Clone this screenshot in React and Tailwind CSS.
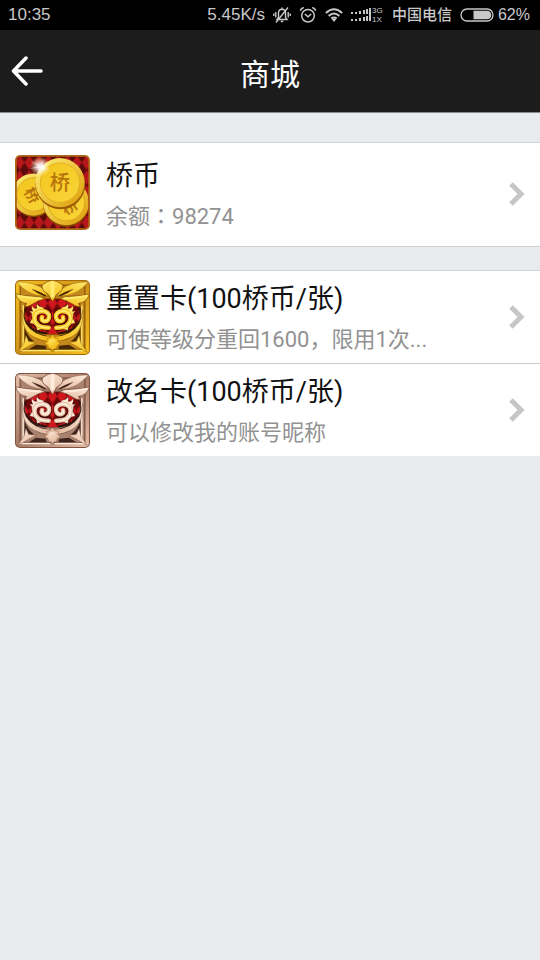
import { useId } from 'react';

const GOLD = {
  frame: '#cf921a', light: '#ffe96f', mid: '#f6c01f', dark: '#7a4704', deep: '#321802', plate: '#c4871a', edge: '#a36c0c',
};

const ROSE = {
  frame: '#a67a66', light: '#fdebdc', mid: '#e6bfa6', dark: '#6b4033', deep: '#2c1511', plate: '#a98370', edge: '#80523f',
};

const CoinIcon = () => (
  <svg viewBox="0 0 220 220" className="mb-1 size-[75px] shrink-0" aria-hidden="true">
    <defs>
      <pattern id="argyle" width="28" height="44" patternUnits="userSpaceOnUse">
        <rect width="28" height="44" fill="#5d0a0b" />
        <path d="M14 0 L28 22 L14 44 L0 22Z" fill="#b5171a" />
      </pattern>
      <linearGradient id="coinRim" x1="0" y1="0" x2="1" y2="1">
        <stop offset="0" stopColor="#fff27a" />
        <stop offset="1" stopColor="#dd9a06" />
      </linearGradient>
      <linearGradient id="coinFace" x1="0" y1="0" x2="1" y2="1">
        <stop offset="0" stopColor="#f3c51c" />
        <stop offset="1" stopColor="#f9d53a" />
      </linearGradient>
      <radialGradient id="coinGlint">
        <stop offset="0" stopColor="#fff" />
        <stop offset="0.35" stopColor="#fff" stopOpacity="0.75" />
        <stop offset="1" stopColor="#fff6a0" stopOpacity="0" />
      </radialGradient>
      <clipPath id="coinClip"><rect x="5" y="5" width="210" height="210" rx="11" /></clipPath>
    </defs>
    <rect width="220" height="220" rx="15" fill="#b46a1c" />
    <g clipPath="url(#coinClip)">
      <rect width="220" height="220" fill="url(#argyle)" />
      <circle cx="55" cy="120" r="62" fill="#8a4a02" />
      <circle cx="54" cy="116" r="62" fill="url(#coinRim)" />
      <circle cx="54" cy="116" r="49" fill="url(#coinFace)" stroke="#d39a10" strokeWidth="2" />
      <text x="50" y="134" fontSize="46" fontWeight="700" fill="#b8740a" textAnchor="middle" transform="rotate(60 50 118)" fontFamily="Noto Sans CJK SC, sans-serif">桥</text>
      <circle cx="150" cy="144" r="67" fill="#8a4a02" />
      <circle cx="150" cy="139" r="67" fill="url(#coinRim)" />
      <circle cx="150" cy="139" r="54" fill="url(#coinFace)" stroke="#d39a10" strokeWidth="2" />
      <text x="160" y="168" fontSize="46" fontWeight="700" fill="#b8740a" textAnchor="middle" transform="rotate(-32 160 152)" fontFamily="Noto Sans CJK SC, sans-serif">桥</text>
      <circle cx="133" cy="86" r="73" fill="#9a5a04" />
      <circle cx="132" cy="81" r="72" fill="url(#coinRim)" />
      <circle cx="132" cy="81" r="58" fill="url(#coinFace)" stroke="#d9a316" strokeWidth="2" />
      <text x="132" y="104" fontSize="60" fontWeight="500" fill="#b8740a" textAnchor="middle" fontFamily="Noto Sans CJK SC, sans-serif">桥</text>
      <circle cx="74" cy="34" r="30" fill="url(#coinGlint)" />
      <path d="M46 18 L74 30 L86 10 L79 33 L102 46 L76 39 L64 62 L70 38 L42 40 L68 32Z" fill="#fff" opacity="0.5" />
    </g>
  </svg>
);

const CURL = 'M99 140 Q58 140 57 112 Q58 91 80 91 Q100 93 100 108 Q98 122 85 121 Q76 118 79 109';

const CardHalf = ({ c, fill }) => (
  <g>
    {/* corner cutouts and struts */}
    <path d="M27 84 L36 76 Q28 96 29 122Z" fill={c.deep} />
    <path d="M28 140 Q37 166 56 180 L28 186Z" fill={c.deep} opacity="0.85" />
    <path d="M40 203 L62 190 L90 193 L93 203Z" fill={c.deep} opacity="0.85" />
    <path d="M24 74 V192" stroke={c.light} strokeWidth="4" />
    <path d="M18 207 H104" stroke={c.light} strokeWidth="4" />
    <path d="M8 213 L27 184 L32 162 L40 180 L62 183 L42 193Z" fill={fill} stroke={c.dark} strokeWidth="1" />
    {/* crescent */}
    <path d="M23 92 Q33 149 94 165 L93 180 Q32 174 23 92Z" fill={c.deep} />
    <path d="M21 88 Q22 110 32 128 Q54 163 104 166 L99 181 Q48 173 32 146 Q19 121 21 88Z" fill={fill} stroke={c.dark} strokeWidth="1" />
    <path d="M32 118 Q48 150 96 154 L92 160 Q46 155 32 118Z" fill={c.deep} />
    {/* flame curl */}
    <path d={CURL} fill="none" stroke="#3f0405" strokeWidth="18" />
    <path d="M50 116 L49 98 L42 91 L52 92 Q46 84 50 75 Q55 85 64 83 Q61 76 65 70 Q69 79 82 80 L90 92 L62 104Z M52 108 L57 130 L43 126Z M60 126 L80 144 L65 148Z" fill={c.light} stroke="#3f0405" strokeWidth="1" />
    <path d={CURL} fill="none" stroke={c.mid} strokeWidth="13" strokeLinecap="round" />
    <path d={CURL} fill="none" stroke={c.light} strokeWidth="6" strokeLinecap="round" />
    {/* wings */}
    <path d="M34 18 Q76 20 94 48 Q54 46 34 18Z" fill={c.deep} />
    <path d="M5 6 Q54 4 86 28 L98 50 Q76 34 50 27 Q64 39 86 47 Q40 48 5 6Z" fill={fill} stroke={c.dark} strokeWidth="1" />
    <path d="M1 40 Q20 48 48 47 Q72 48 90 54 Q68 60 54 69 Q40 80 28 78 L34 69 Q10 66 1 40Z" fill={fill} stroke={c.dark} strokeWidth="2" />
    <path d="M8 46 Q42 54 78 54" stroke={c.light} strokeWidth="5" fill="none" />
  </g>
);

const CardIcon = ({ c }) => {
  const id = useId();

  return (
    <svg viewBox="0 0 220 220" className="size-[75px] shrink-0" aria-hidden="true">
      <defs>
        <linearGradient id={`${id}m`} x1="0" y1="0" x2="0.6" y2="1">
          <stop offset="0" stopColor={c.light} />
          <stop offset="1" stopColor={c.mid} />
        </linearGradient>
        <linearGradient id={`${id}f`} x1="0" y1="0" x2="1" y2="1">
          <stop offset="0" stopColor={c.mid} />
          <stop offset="0.5" stopColor={c.frame} />
          <stop offset="1" stopColor={c.mid} />
        </linearGradient>
        <pattern id={`${id}d`} x="12" y="2" width="28" height="44" patternUnits="userSpaceOnUse">
          <rect width="28" height="44" fill="#6d0709" />
          <path d="M14 0 L28 22 L14 44 L0 22Z" fill="#d0171b" />
        </pattern>
      </defs>
      <rect width="220" height="220" rx="15" fill={c.edge} />
      <rect x="3" y="3" width="214" height="214" rx="12" fill={`url(#${id}f)`} />
      <rect x="15" y="15" width="190" height="190" fill={c.plate} stroke={c.dark} strokeWidth="3" />
      <path d="M34 55 H186 Q202 104 180 135 Q156 160 110 160 Q64 160 40 135 Q18 104 34 55Z" fill={`url(#${id}d)`} stroke={c.dark} strokeWidth="2" />
      <CardHalf c={c} fill={`url(#${id}m)`} />
      <g transform="translate(220 0) scale(-1 1)">
        <CardHalf c={c} fill={`url(#${id}m)`} />
      </g>
      <path d="M110 1 L123 4 L140 14 Q143 29 129 37 Q118 43 115 56 L110 62 L105 56 Q102 43 91 37 Q77 29 80 14 L97 4Z" fill={`url(#${id}m)`} stroke={c.dark} strokeWidth="2" />
      <path d="M110 9 V46" stroke={c.light} strokeWidth="12" strokeLinecap="round" />
      <path d="M110 160 L117 169 L127 171 L126 180 L133 187 L124 192 L121 202 L114 202 L110 211 L106 202 L99 202 L96 192 L87 187 L94 180 L93 171 L103 169Z" fill={c.mid} stroke={c.dark} strokeWidth="1" />
      <circle cx="110" cy="185" r="12" fill={`url(#${id}m)`} />
    </svg>
  );
};

const Chevron = () => (
  <svg viewBox="0 0 16 26" className="h-[26px] w-4 shrink-0" fill="none" stroke="#c6c6c8" strokeWidth="5" aria-hidden="true">
    <path d="M2 3 L12 13 L2 23" />
  </svg>
);

const StoreRow = ({ icon, title, desc, className }) => (
  <button type="button" className={`flex w-full items-center gap-4 bg-white px-[15px] text-left ${className}`}>
    {icon}
    <span className="flex min-w-0 flex-1 flex-col pt-1">
      <span className="truncate text-[27px] leading-[42px] text-[#111]">{title}</span>
      <span className="h-10 truncate text-[22px] leading-[40px] text-[#929292]">{desc}</span>
    </span>
    <Chevron />
  </button>
);

const StatusBar = () => (
  <div className="flex h-[30px] items-center bg-black pr-2.5 pl-2 font-['Liberation_Sans','Noto_Sans_CJK_SC',sans-serif] text-[17px] text-[#c8c8c8]">
    <span>10:35</span>
    <span className="ml-auto">5.45K/s</span>

    {/* muted bell */}
    <svg viewBox="0 0 18 18" className="ml-2 size-[18px]" fill="none" stroke="currentColor" strokeWidth="1.4">
      <path d="M4 13.5 L5.5 11.5 V7 Q5.5 3.4 9 3.2 Q12.5 3.4 12.5 7 V11.5 L14 13.5Z M7.8 15.5 H10.2 M9 1.5 V3 M2.8 6 V11.5 M15.2 6 V11.5 M.8 7.5 V10 M17.2 7.5 V10 M15 1.5 L3 16.5" />
    </svg>
    {/* alarm */}
    <svg viewBox="0 0 18 18" className="ml-2 size-[18px]" fill="none" stroke="currentColor" strokeWidth="1.5">
      <circle cx="9" cy="9.7" r="6.3" />
      <path d="M5.8 8 L9 10.8 L12.2 8 M1.3 4.8 Q2 2.2 4.8 1.6 M16.7 4.8 Q16 2.2 13.2 1.6" />
    </svg>
    {/* wifi */}
    <svg viewBox="0 0 18 18" className="ml-2 size-[18px]" fill="none" stroke="currentColor" strokeWidth="2">
      <path d="M.9 7 Q9 -.6 17.1 7 M3.7 10 Q9 5 14.3 10 M6.3 12.6 Q9 10.3 11.7 12.6" />
      <path d="M6.8 13.2 Q9 11.6 11.2 13.2 L9 16Z" fill="currentColor" stroke="none" />
    </svg>
    {/* dual sim signal */}
    <svg viewBox="0 0 20 16" className="ml-2 h-4 w-5" fill="currentColor">
      <path d="M0 5h2v2H0z M4 5h2v2H4z M8 4h2v3H8z M12 3h2v4h-2z M15 2h2v5h-2z M0 12h2v2H0z M4 12h2v2H4z M8 11h2v3H8z M12 10h2v4h-2z M15 9h2v5h-2z M18 1h2v13h-2z" />
    </svg>
    <span className="ml-px flex w-3 flex-col text-[8px] leading-[9px]">
      <span>3G</span>
      <span>1X</span>
    </span>
    <span className="ml-2 text-[15px] font-medium">中国电信</span>
    {/* battery */}
    <svg viewBox="0 0 34 14" className="ml-2 h-3.5 w-[34px]">
      <rect x="1" y="1" width="32" height="12" rx="6" fill="none" stroke="currentColor" strokeWidth="1.3" />
      <path d="M13.5 2.7 H27 A4.3 4.3 0 0 1 27 11.3 H13.5Z" fill="currentColor" />
    </svg>
    <span className="ml-1 text-[16px]">62%</span>
  </div>
);

export default function App() {
  return (
    <div className="min-h-screen bg-[#e9ebed] font-[Roboto,'Noto_Sans_CJK_SC',sans-serif]">
      <StatusBar />

      <header className="grid h-[83px] grid-cols-[1fr_auto_1fr] items-center border-b border-[#8a8a8a] bg-[#1c1c1c]">
        <button type="button" aria-label="返回" className="ml-2.5 justify-self-start">
          <svg viewBox="0 0 34 30" className="h-[30px] w-[34px]" fill="none" stroke="#fff" strokeWidth="3.5" strokeLinecap="round" strokeLinejoin="round">
            <path d="M16 2 L3.5 15 L16 28 M4 15 H31" />
          </svg>
        </button>
        <h1 className="pt-2 text-[30px] leading-[42px] text-white">商城</h1>
      </header>

      <main className="flex flex-col gap-[23px] pt-[29px]">
        <section className="border-y border-[#cfd0d2]">
          <StoreRow
            className="pt-2 pb-[9px]"
            icon={<CoinIcon />}
            title="桥币"
            desc={<>余额<span className="font-['Noto_Sans_CJK_JP',sans-serif] leading-none">：</span>98274</>}
          />
        </section>

        <section className="divide-y divide-[#c9cacc] border-t border-[#cfd0d2]">
          <StoreRow
            className="py-[3px]"
            icon={<CardIcon c={GOLD} />}
            title="重置卡(100桥币/张)"
            desc="可使等级分重回1600，限用1次..."
          />
          <StoreRow
            className="py-[3px]"
            icon={<CardIcon c={ROSE} />}
            title="改名卡(100桥币/张)"
            desc="可以修改我的账号昵称"
          />
        </section>
      </main>
    </div>
  );
}
